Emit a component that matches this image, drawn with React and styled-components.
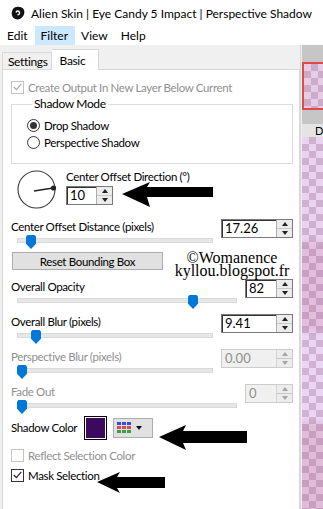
import React from "react"
import styled, { createGlobalStyle, css } from "styled-components"

const GlobalStyle = createGlobalStyle`
  html, body { margin: 0; padding: 0; background: #f0f0f0; }
  body {
    font-family: Lato, "Liberation Sans", sans-serif;
    font-size: 11.5px;
    letter-spacing: -0.35px;
    color: #000;
  }
`

const Window = styled.div`
  position: relative;
  width: 323px;
  height: 509px;
  overflow: hidden;
  display: flex;
  flex-direction: column;
  background: #f0f0f0;
`

const TitleBar = styled.div`
  height: 26px;
  display: flex;
  align-items: center;
  gap: 6px;
  padding-left: 11px;
  background: #fff;
  font-size: 12px;
  letter-spacing: 0;
  white-space: nowrap;
`

const MenuBar = styled.div`
  height: 19px;
  display: flex;
  align-items: stretch;
  padding-left: 1px;
  background: #fff;
  font-size: 12px;
  letter-spacing: 0;
`

const MenuItem = styled.div`
  display: flex;
  align-items: center;
  padding: 0 7px 0 6px;
  background: ${p => (p.$active ? "#cce8ff" : "transparent")};
`

const Body = styled.div`
  flex: 1;
  display: flex;
  min-height: 0;
`

const Main = styled.div`
  width: 303px;
  padding: 4px 0 0 2px;
  display: flex;
  flex-direction: column;
`

const TabRow = styled.div`
  height: 20px;
  display: flex;
  align-items: flex-end;
  position: relative;
  z-index: 1;
`

const Tab = styled.div`
  display: flex;
  align-items: center;
  padding: 0 3px 0 5px;
  border: 1px solid #d9d9d9;
  box-sizing: border-box;
  font-size: 12px;
  ${p =>
    p.$selected
      ? css`
          height: 21px;
          margin-bottom: -1px;
          padding: 0 13px 0 8px;
          background: #fff;
          border-bottom: none;
          border-left: none;
        `
      : css`
          height: 17px;
          background: #f0f0f0;
          border-bottom: none;
        `}
`

const Panel = styled.div`
  flex: 1;
  width: 298px;
  box-sizing: border-box;
  background: #fff;
  border: 1px solid #d9d9d9;
  border-bottom: none;
  padding: 9px 6px 0 8px;
  display: flex;
  flex-direction: column;
`

const Strip = styled.div`
  flex: 1;
  display: flex;
  flex-direction: column;
  background: #f0f0f0;
  border-left: 1px solid #d6d6d6;
  padding-left: 1px;
`

const Checker = styled.div`
  background:
    repeating-conic-gradient(rgba(110, 50, 100, 0.22) 0 25%, transparent 0 50%) 0 0 / 14px 14px,
    ${p => p.$bg};
`

const StripGray = styled.div`
  height: ${p => p.$h}px;
  background: #c6c6c6;
`

const Thumbnail = styled(Checker)`
  height: 44px;
  border: 2px solid #e2484a;
  border-right: none;
`

const StripLabel = styled.div`
  height: 13px;
  background: #e4e4e4;
  padding-left: 13px;
  font-size: 11px;
  line-height: 13px;
  overflow: hidden;
`

const StripCanvas = styled(Checker)`
  flex: 1;
`

const CheckRow = styled.label`
  display: flex;
  align-items: center;
  gap: 4px;
  height: 16px;
  color: ${p => (p.$disabled ? "#8f8f8f" : "#000")};
  white-space: nowrap;
`

const Box = styled.span`
  width: 11px;
  height: 11px;
  border: 1px solid ${p => (p.$disabled ? "#c4c4c4" : "#333")};
  background: #fff;
  display: flex;
  align-items: center;
  justify-content: center;
  flex-shrink: 0;
`

const Group = styled.fieldset`
  margin: 1px 0 0 0;
  padding: 5px 0 13px 15px;
  border: 1px solid #dcdcdc;
  display: flex;
  flex-direction: column;
  gap: 1px;
`

const Legend = styled.legend`
  padding: 0 2px;
  margin-left: 5px;
  line-height: 16px;
  font-size: 12px;
`

const Radio = styled.span`
  width: 11px;
  height: 11px;
  border-radius: 50%;
  border: 1px solid #333;
  display: flex;
  align-items: center;
  justify-content: center;
  flex-shrink: 0;
  &::after {
    content: "";
    width: 7px;
    height: 7px;
    border-radius: 50%;
    background: ${p => (p.$on ? "#333" : "transparent")};
  }
`

const DirectionRow = styled.div`
  display: flex;
  gap: 8px;
  margin-top: 6px;
  height: 49px;
  padding-left: 6px;
`

const DirectionSide = styled.div`
  display: flex;
  flex-direction: column;
  gap: 2px;
  padding-left: 1px;
`

const Label = styled.div`
  line-height: ${p => p.$lh || 15}px;
  height: 14px;
  white-space: nowrap;
  color: ${p => (p.$disabled ? "#8f8f8f" : "#000")};
`

const SpinWrap = styled.div`
  display: flex;
  width: ${p => p.$w}px;
  height: 19px;
  box-sizing: border-box;
  border: 1px solid ${p => (p.$disabled ? "#cccccc" : "#7a7a7a")};
  background: ${p => (p.$disabled ? "#f0f0f0" : "#fff")};
`

const SpinText = styled.div`
  flex: 1;
  padding-left: 3px;
  line-height: 17px;
  font-size: 13px;
  letter-spacing: 0;
  color: ${p => (p.$disabled ? "#8f8f8f" : "#000")};
  border-right: 1px solid ${p => (p.$disabled ? "#d4d4d4" : "#adadad")};
  ${p =>
    !p.$disabled &&
    css`
      box-shadow: inset 1px 1px 0 #333;
    `}
`

const SpinButtons = styled.div`
  width: 15px;
  display: flex;
  flex-direction: column;
  background: #ececec;
`

const SpinBtn = styled.div`
  flex: 1;
  display: flex;
  align-items: center;
  justify-content: center;
  &:first-child { border-bottom: 1px solid #c8c8c8; }
  &::after {
    content: "";
    border-left: 3px solid transparent;
    border-right: 3px solid transparent;
    ${p =>
      p.$up
        ? css`border-bottom: 4px solid ${p.$disabled ? "#a6a6a6" : "#222"};`
        : css`border-top: 4px solid ${p.$disabled ? "#a6a6a6" : "#222"};`}
  }
`

const SliderBlock = styled.div`
  height: ${p => p.$h || 35}px;
  display: grid;
  grid-template-columns: 1fr auto;
  grid-template-rows: 14px 1fr;
  margin-top: ${p => p.$mt || 0}px;
`

const SliderCell = styled.div`
  grid-column: 1;
  grid-row: 2;
  position: relative;
  margin: 0 8px 0 6px;
`

const Track = styled.div`
  position: absolute;
  left: 0;
  right: 0;
  top: 5px;
  height: 3px;
  background: #e7e7e7;
  border: 1px solid #dadada;
`

const Thumb = styled.div`
  position: absolute;
  top: 2px;
  left: ${p => p.$pos - 5}px;
  width: 10px;
  height: 14px;
  background: #0078d7;
  clip-path: polygon(15% 0, 85% 0, 100% 10%, 100% 62%, 50% 100%, 0 62%, 0 10%);
`

const SpinCell = styled.div`
  grid-column: 2;
  grid-row: 1 / span 2;
`

const ResetButton = styled.div`
  width: 151px;
  height: 18px;
  box-sizing: border-box;
  margin-left: 1px;
  background: #e1e1e1;
  border: 1px solid #adadad;
  display: flex;
  align-items: center;
  justify-content: center;
`

const ColorRow = styled.div`
  display: flex;
  align-items: center;
  height: 23px;
  margin-top: -3px;
`

const ColorLabel = styled.div`
  width: 73px;
  white-space: nowrap;
`

const Swatch = styled.div`
  width: 19px;
  height: 20px;
  border: 1px solid #000;
  box-shadow: inset 0 0 0 1px #fff;
  background: ${p => p.$color};
  padding: 1px;
`

const PickerButton = styled.div`
  width: 40px;
  height: 20px;
  margin-left: 6px;
  box-sizing: border-box;
  background: #e1e1e1;
  border: 1px solid #adadad;
  display: flex;
  align-items: center;
  gap: 5px;
  padding-left: 3px;
  &::after {
    content: "";
    border-left: 3.5px solid transparent;
    border-right: 3.5px solid transparent;
    border-top: 4px solid #111;
  }
`

const Grid = styled.div`
  display: grid;
  grid-template-columns: repeat(3, 4px);
  grid-auto-rows: 3px;
  gap: 1px;
`

const Cell = styled.span`
  background: ${p => p.$c};
`

const CheckList = styled.div`
  display: flex;
  flex-direction: column;
  gap: 4px;
  margin-top: 8px;
`

const Watermark = styled.div`
  position: absolute;
  left: 173px;
  top: 251px;
  font-family: "Liberation Serif", "DejaVu Serif", serif;
  font-size: 16px;
  letter-spacing: 0;
  line-height: 13px;
  text-align: center;
  width: 118px;
`

const Arrow = styled.svg`
  position: absolute;
  left: 0;
  top: 0;
  pointer-events: none;
`

const CheckMark = ({ color }) => (
  <svg width="9" height="8" viewBox="0 0 9 8">
    <path d="M0.8 4 L3.4 6.6 L8.3 0.8" fill="none" stroke={color} strokeWidth="1.2" />
  </svg>
)

const Spin = ({ value, w, disabled }) => (
  <SpinWrap $w={w} $disabled={disabled}>
    <SpinText $disabled={disabled}>{value}</SpinText>
    <SpinButtons>
      <SpinBtn $up $disabled={disabled} />
      <SpinBtn $disabled={disabled} />
    </SpinButtons>
  </SpinWrap>
)

const ValueSlider = ({ label, value, w, pos, disabled, mt, h }) => (
  <SliderBlock $mt={mt} $h={h}>
    <Label $disabled={disabled}>{label}</Label>
    <SliderCell>
      <Track />
      <Thumb $pos={pos} />
    </SliderCell>
    <SpinCell>
      <Spin value={value} w={w} disabled={disabled} />
    </SpinCell>
  </SliderBlock>
)

const Dial = () => (
  <svg width="40" height="40" viewBox="0 0 40 40">
    <circle cx="19.5" cy="19.5" r="18.5" fill="none" stroke="#3a3a3a" strokeWidth="1.1" />
    <line x1="17" y1="21" x2="36" y2="18" stroke="#222" strokeWidth="1.4" />
    <circle cx="36.5" cy="18" r="2.6" fill="#222" />
  </svg>
)

const Logo = () => (
  <svg width="14" height="14" viewBox="0 0 14 14">
    <path d="M2 3 C4 0 10 0 12.5 3 C14.5 6 13 11 9 13 C5 14.5 1 12 0.8 8 C0.6 6 1 4.5 2 3 Z" fill="#111" />
    <path d="M5 6.5 C5.5 4.5 8 4.5 8.5 6.5 C8.8 8 7.5 9 6.5 8.5" fill="none" stroke="#fff" strokeWidth="1.4" />
  </svg>
)

const BANDS =
  "linear-gradient(#e9d3ee 0, #e9d3ee 100px, #e2bedc 110px, #e2bedc 190px, #ead6f4 200px, #ead6f4 280px, #e0bcd8 290px, #e0bcd8 100%)"

const PICKER = ["#3b46e6", "#3b46e6", "#3b46e6", "#e24a4a", "#e24a4a", "#e24a4a", "#35a04a", "#35a04a", "#35a04a"]

export default function App() {
  return (
    <Window>
      <GlobalStyle />
      <TitleBar>
        <Logo />
        <span>Alien Skin | Eye Candy 5 Impact | Perspective Shadow</span>
      </TitleBar>
      <MenuBar>
        <MenuItem>Edit</MenuItem>
        <MenuItem $active>Filter</MenuItem>
        <MenuItem>View</MenuItem>
        <MenuItem>Help</MenuItem>
      </MenuBar>
      <Body>
        <Main>
          <TabRow>
            <Tab>Settings</Tab>
            <Tab $selected>Basic</Tab>
          </TabRow>
          <Panel>
            <CheckRow $disabled>
              <Box $disabled>
                <CheckMark color="#a8a8a8" />
              </Box>
              Create Output In New Layer Below Current
            </CheckRow>
            <Group>
              <Legend>Shadow Mode</Legend>
              <CheckRow>
                <Radio $on />
                Drop Shadow
              </CheckRow>
              <CheckRow>
                <Radio />
                Perspective Shadow
              </CheckRow>
            </Group>
            <DirectionRow>
              <Dial />
              <DirectionSide>
                <Label $lh={13}>Center Offset Direction (°)</Label>
                <Spin value="10" w={47} />
              </DirectionSide>
            </DirectionRow>
            <ValueSlider label="Center Offset Distance (pixels)" value="17.26" w={72} pos={14} h={33} />
            <ResetButton>Reset Bounding Box</ResetButton>
            <ValueSlider label="Overall Opacity" value="82" w={48} pos={176} mt={9} />
            <ValueSlider label="Overall Blur (pixels)" value="9.41" w={72} pos={19} />
            <ValueSlider label="Perspective Blur (pixels)" value="0.00" w={72} pos={5} disabled />
            <ValueSlider label="Fade Out" value="0" w={48} pos={5} disabled />
            <ColorRow>
              <ColorLabel>Shadow Color</ColorLabel>
              <Swatch $color="#3b0a5e" />
              <PickerButton>
                <Grid>
                  {PICKER.map((c, i) => (
                    <Cell key={i} $c={c} />
                  ))}
                </Grid>
              </PickerButton>
            </ColorRow>
            <CheckList>
              <CheckRow $disabled>
                <Box $disabled />
                Reflect Selection Color
              </CheckRow>
              <CheckRow>
                <Box>
                  <CheckMark color="#222" />
                </Box>
                Mask Selection
              </CheckRow>
            </CheckList>
          </Panel>
        </Main>
        <Strip>
          <StripGray $h={17} />
          <Thumbnail $bg="#e6cde6" />
          <StripGray $h={14} />
          <StripLabel>D</StripLabel>
          <StripCanvas $bg={BANDS} />
        </Strip>
      </Body>
      <Watermark>
        ©Womanence
        <br />
        kyllou.blogspot.fr
      </Watermark>
      <Arrow width="323" height="509" viewBox="0 0 323 509">
        <polygon points="122,194 150,182 147,187 213,187 213,197 147,197 150,207" fill="#000" />
        <polygon points="159,437 186,425 183,431 247,431 247,443 183,443 186,450" fill="#000" />
        <polygon points="97,482 120,472 117,477 165,477 165,488 117,488 120,493" fill="#000" />
      </Arrow>
    </Window>
  )
}
